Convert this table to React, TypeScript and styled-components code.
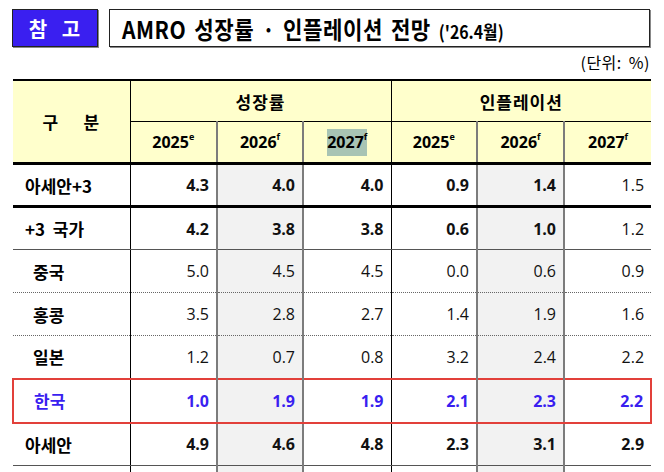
import styled, { createGlobalStyle, css } from 'styled-components';

const GlobalStyle = createGlobalStyle`
  html, body {
    margin: 0;
    padding: 0;
    background: #ffffff;
  }
  body {
    font-family: "Noto Sans CJK KR", "Open Sans", sans-serif;
    color: #000;
  }
`;

type RowKind = 'total' | 'group' | 'item' | 'korea' | 'asean' | 'blank';

interface Row {
  label: string;
  kind: RowKind;
  values: string[];
  bottom: 'thick' | 'solid' | 'dotted' | 'none';
}

const rows: Row[] = [
  { label: '아세안+3', kind: 'total', values: ['4.3', '4.0', '4.0', '0.9', '1.4', '1.5'], bottom: 'thick' },
  { label: '+3  국가', kind: 'group', values: ['4.2', '3.8', '3.8', '0.6', '1.0', '1.2'], bottom: 'solid' },
  { label: '중국', kind: 'item', values: ['5.0', '4.5', '4.5', '0.0', '0.6', '0.9'], bottom: 'dotted' },
  { label: '홍콩', kind: 'item', values: ['3.5', '2.8', '2.7', '1.4', '1.9', '1.6'], bottom: 'dotted' },
  { label: '일본', kind: 'item', values: ['1.2', '0.7', '0.8', '3.2', '2.4', '2.2'], bottom: 'none' },
  { label: '한국', kind: 'korea', values: ['1.0', '1.9', '1.9', '2.1', '2.3', '2.2'], bottom: 'none' },
  { label: '아세안', kind: 'asean', values: ['4.9', '4.6', '4.8', '2.3', '3.1', '2.9'], bottom: 'solid' },
  { label: '', kind: 'blank', values: ['', '', '', '', '', ''], bottom: 'none' },
];

// sub items and the last inflation column of the aggregates are regular weight
const boldCols: Record<RowKind, boolean[]> = {
  total: [true, true, true, true, true, false],
  group: [true, true, true, true, true, false],
  item: [false, false, false, false, false, false],
  korea: [true, true, true, true, true, true],
  asean: [true, true, true, true, true, true],
  blank: [false, false, false, false, false, false],
};

const years = [
  { y: '2025', s: 'e' },
  { y: '2026', s: 'f' },
  { y: '2027', s: 'f', mark: true },
  { y: '2025', s: 'e' },
  { y: '2026', s: 'f' },
  { y: '2027', s: 'f' },
];

const colWidths = [117, 87, 86, 88, 86, 87, 87];

const BLUE = '#3a1ff0';
const RED = '#e2403a';
const SHADE_LINE = '2px solid #7c7c7c';

export default function App() {
  return (
    <>
      <GlobalStyle />
      <Page>
        <TitleBar>
          <Badge>참 고</Badge>
          <TitleBox>
            <TitleText>
              AMRO&nbsp;성장률 · 인플레이션&nbsp;전망 <TitleDate>('26.4월)</TitleDate>
            </TitleText>
          </TitleBox>
        </TitleBar>
        <Unit>(단위: %)</Unit>
        <Table>
          <colgroup>
            {colWidths.map((w, i) => (
              <col key={i} style={{ width: w }} />
            ))}
          </colgroup>
          <thead>
            <tr>
              <HeadCell rowSpan={2} $first>
                구&nbsp;&nbsp;&nbsp;&nbsp;&nbsp;분
              </HeadCell>
              <HeadCell colSpan={3} $group>
                성장률
              </HeadCell>
              <HeadCell colSpan={3} $group>
                인플레이션
              </HeadCell>
            </tr>
            <tr>
              {years.map((y, i) => (
                <YearCell key={i} $shaded={i === 1 || i === 4} $groupStart={i === 0 || i === 3}>
                  <YearText $mark={!!y.mark}>
                    {y.y}
                    <sup>{y.s}</sup>
                  </YearText>
                </YearCell>
              ))}
            </tr>
          </thead>
          <tbody>
            {rows.map((r, ri) => (
              <DataRow key={ri} $kind={r.kind}>
                <LabelCell $kind={r.kind} $bottom={r.bottom}>
                  {r.label}
                </LabelCell>
                {r.values.map((v, ci) => (
                  <ValueCell
                    key={ci}
                    $kind={r.kind}
                    $bottom={r.bottom}
                    $shaded={ci === 1 || ci === 4}
                    $bold={boldCols[r.kind][ci]}
                    $last={ci === 5}
                    $groupStart={ci === 0 || ci === 3}
                  >
                    {v}
                  </ValueCell>
                ))}
              </DataRow>
            ))}
          </tbody>
        </Table>
      </Page>
    </>
  );
}

const Page = styled.div`
  width: 664px;
  height: 472px;
  overflow: hidden;
  padding: 9px 14px 0 12px;
  box-sizing: border-box;
`;

const TitleBar = styled.div`
  display: flex;
  align-items: stretch;
  gap: 11px;
  height: 38px;
`;

const Badge = styled.div`
  width: 86px;
  box-sizing: border-box;
  background: ${BLUE};
  border: 1px solid #222;
  box-shadow: 1px 1px 0 #888;
  color: #fff;
  font-family: "Noto Sans CJK KR", sans-serif;
  font-weight: 700;
  font-size: 20px;
  letter-spacing: 5px;
  display: flex;
  align-items: center;
  justify-content: center;
  padding-left: 4px;
`;

const TitleBox = styled.div`
  flex: 1;
  box-sizing: border-box;
  border: 1px solid #222;
  box-shadow: 1px 1px 0 #888;
  display: flex;
  align-items: center;
  padding-left: 12px;
  overflow: hidden;
`;

const TitleText = styled.span`
  display: inline-block;
  font-family: "Noto Sans CJK KR", sans-serif;
  font-weight: 700;
  font-size: 24px;
  white-space: nowrap;
  transform: scaleX(0.88);
  transform-origin: left center;
  letter-spacing: 0.6px;
  word-spacing: 3px;
`;

const TitleDate = styled.span`
  font-size: 18px;
  letter-spacing: 0;
`;

const Unit = styled.div`
  text-align: right;
  font-family: "Noto Sans CJK KR", sans-serif;
  font-size: 16px;
  height: 32px;
  line-height: 30px;
  letter-spacing: 0.5px;
  word-spacing: 3px;
`;

const Table = styled.table`
  border-collapse: collapse;
  table-layout: fixed;
  width: 638px;
  font-family: "Noto Sans CJK KR", "Open Sans", sans-serif;
`;

const HeadCell = styled.th<{ $first?: boolean; $group?: boolean }>`
  background: #ffffcc;
  font-weight: 700;
  font-size: 17px;
  height: 40px;
  padding: 0;
  text-align: center;
  border-top: 2px solid #000;
  border-left: 1px solid #000;
  border-bottom: ${(p) => (p.$first ? '3px solid #000' : '1px solid #000')};
  ${(p) => p.$first && css`border-left: none;`}
  letter-spacing: 1px;
`;

const YearCell = styled.th<{ $shaded: boolean; $groupStart: boolean }>`
  background: #ffffcc;
  font-family: "Open Sans", "Noto Sans CJK KR", sans-serif;
  font-weight: 700;
  font-size: 16px;
  height: 40px;
  padding: 0;
  text-align: center;
  border-bottom: 3px solid #000;
  border-left: ${(p) => (p.$groupStart ? '1px solid #000' : SHADE_LINE)};
  ${(p) => p.$shaded && css`border-right: ${SHADE_LINE};`}

  sup {
    font-size: 9px;
    vertical-align: 8px;
    line-height: 0;
  }
`;

const YearText = styled.span<{ $mark: boolean }>`
  padding: 2px 0 3px;
  ${(p) => p.$mark && css`background: #a8c4b4;`}
`;

const DataRow = styled.tr<{ $kind: RowKind }>`
  height: ${(p) => (p.$kind === 'korea' ? 44 : 43)}px;
`;

const bottomLine = (b: Row['bottom']) => {
  switch (b) {
    case 'thick':
      return '3px solid #000';
    case 'solid':
      return '1px solid #555';
    case 'dotted':
      return '1px dotted #666';
    default:
      return 'none';
  }
};

const koreaFrame = (kind: RowKind) =>
  kind === 'korea' &&
  css`
    border-top: 2px solid ${RED};
    border-bottom: 2px solid ${RED};
    color: ${BLUE};
  `;

const LabelCell = styled.td<{ $kind: RowKind; $bottom: Row['bottom'] }>`
  padding: 0 0 0 ${(p) => (p.$kind === 'item' || p.$kind === 'korea' ? 20 : 12)}px;
  font-weight: 700;
  font-size: 17px;
  white-space: pre;
  border-right: 1px dotted #000;
  border-bottom: ${(p) => bottomLine(p.$bottom)};
  ${(p) => koreaFrame(p.$kind)}
  ${(p) => p.$kind === 'korea' && css`border-left: 2px solid ${RED};`}
`;

const ValueCell = styled.td<{
  $kind: RowKind;
  $bottom: Row['bottom'];
  $shaded: boolean;
  $bold: boolean;
  $last: boolean;
  $groupStart: boolean;
}>`
  padding: 0 7px 0 0;
  text-align: right;
  font-family: "Open Sans", "Noto Sans CJK KR", sans-serif;
  font-size: 16px;
  font-weight: ${(p) => (p.$bold ? 700 : 400)};
  color: #111;
  background: ${(p) => (p.$shaded ? '#f2f2f2' : '#fff')};
  border-bottom: ${(p) => bottomLine(p.$bottom)};
  ${(p) => p.$groupStart && css`border-left: 1px solid #000;`}
  ${(p) =>
    p.$shaded &&
    css`
      border-left: ${SHADE_LINE};
      border-right: ${SHADE_LINE};
    `}
  ${(p) => koreaFrame(p.$kind)}
  ${(p) => p.$kind === 'korea' && p.$last && css`border-right: 2px solid ${RED};`}
`;
